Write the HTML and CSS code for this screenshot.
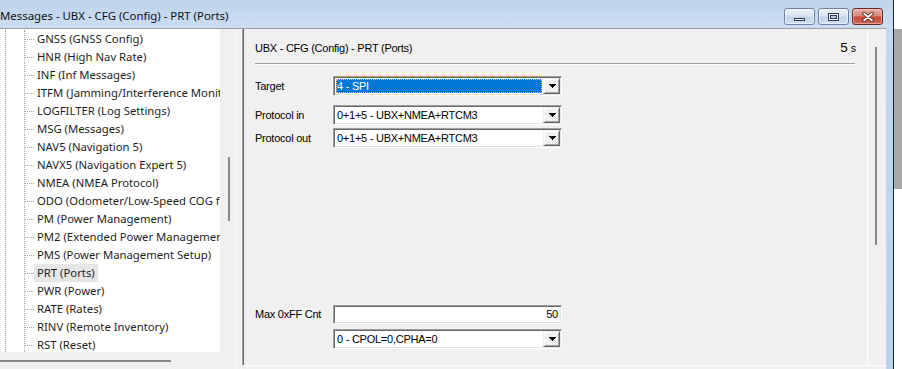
FILE: index.html
```html
<!DOCTYPE html>
<html>
<head>
<meta charset="utf-8">
<link rel="stylesheet" href="styles.css">
</head>
<body>
<div class="screen">
  <div class="win">
    <div class="titlebar">
      <div class="title">Messages - UBX - CFG (Config) - PRT (Ports)</div>
      <div class="caption">
        <div class="cbtn"><span class="min-glyph"></span></div>
        <div class="cbtn"><span class="max-glyph"><span class="max-in"></span></span></div>
        <div class="cbtn close">
          <svg width="12" height="10" viewBox="0 0 12 10"><path d="M2 1.5L10 8.5M10 1.5L2 8.5" stroke="#4a1a15" stroke-width="3.6" stroke-linecap="round"/><path d="M2 1.5L10 8.5M10 1.5L2 8.5" stroke="#fff" stroke-width="1.8" stroke-linecap="round"/></svg>
        </div>
      </div>
    </div>
    <div class="frame-body">
      <div class="client">
        <div class="left">
          <div class="left-top">
            <div class="tree">
              <div class="rail"></div>
              <div class="items">
                <div class="item"><span class="dash"></span><span class="lbl">GNSS (GNSS Config)</span></div>
                <div class="item"><span class="dash"></span><span class="lbl">HNR (High Nav Rate)</span></div>
                <div class="item"><span class="dash"></span><span class="lbl">INF (Inf Messages)</span></div>
                <div class="item"><span class="dash"></span><span class="lbl">ITFM (Jamming/Interference Monitor)</span></div>
                <div class="item"><span class="dash"></span><span class="lbl">LOGFILTER (Log Settings)</span></div>
                <div class="item"><span class="dash"></span><span class="lbl">MSG (Messages)</span></div>
                <div class="item"><span class="dash"></span><span class="lbl">NAV5 (Navigation 5)</span></div>
                <div class="item"><span class="dash"></span><span class="lbl">NAVX5 (Navigation Expert 5)</span></div>
                <div class="item"><span class="dash"></span><span class="lbl">NMEA (NMEA Protocol)</span></div>
                <div class="item"><span class="dash"></span><span class="lbl">ODO (Odometer/Low-Speed COG filter)</span></div>
                <div class="item"><span class="dash"></span><span class="lbl">PM (Power Management)</span></div>
                <div class="item"><span class="dash"></span><span class="lbl">PM2 (Extended Power Management)</span></div>
                <div class="item"><span class="dash"></span><span class="lbl">PMS (Power Management Setup)</span></div>
                <div class="item"><span class="dash"></span><span class="lbl sel">PRT (Ports)</span></div>
                <div class="item"><span class="dash"></span><span class="lbl">PWR (Power)</span></div>
                <div class="item"><span class="dash"></span><span class="lbl">RATE (Rates)</span></div>
                <div class="item"><span class="dash"></span><span class="lbl">RINV (Remote Inventory)</span></div>
                <div class="item"><span class="dash"></span><span class="lbl">RST (Reset)</span></div>
              </div>
            </div>
            <div class="vscroll"><div class="vthumb"></div></div>
          </div>
          <div class="hscroll"><div class="hthumb"></div></div>
        </div>
        <div class="splitter"></div>
        <div class="panel">
          <div class="pinner">
            <div class="phead">
              <span>UBX - CFG (Config) - PRT (Ports)</span>
              <span class="age">5<small>s</small></span>
            </div>
            <div class="sep"></div>
            <div class="row r1">
              <span class="label">Target</span>
              <div class="combo">
                <span class="cval sel">4 - SPI</span>
                <span class="dd"><svg width="7" height="4" viewBox="0 0 7 4"><path d="M0 0h7v1H0zM1 1h5v1H1zM2 2h3v1H2zM3 3h1v1H3z" fill="#000"/></svg></span>
              </div>
            </div>
            <div class="row r2">
              <span class="label">Protocol in</span>
              <div class="combo">
                <span class="cval">0+1+5 - UBX+NMEA+RTCM3</span>
                <span class="dd"><svg width="7" height="4" viewBox="0 0 7 4"><path d="M0 0h7v1H0zM1 1h5v1H1zM2 2h3v1H2zM3 3h1v1H3z" fill="#000"/></svg></span>
              </div>
            </div>
            <div class="row r3">
              <span class="label">Protocol out</span>
              <div class="combo">
                <span class="cval">0+1+5 - UBX+NMEA+RTCM3</span>
                <span class="dd"><svg width="7" height="4" viewBox="0 0 7 4"><path d="M0 0h7v1H0zM1 1h5v1H1zM2 2h3v1H2zM3 3h1v1H3z" fill="#000"/></svg></span>
              </div>
            </div>
            <div class="row r4">
              <span class="label">Max 0xFF Cnt</span>
              <div class="input">50</div>
            </div>
            <div class="row r5">
              <span class="label"></span>
              <div class="combo">
                <span class="cval">0 - CPOL=0,CPHA=0</span>
                <span class="dd"><svg width="7" height="4" viewBox="0 0 7 4"><path d="M0 0h7v1H0zM1 1h5v1H1zM2 2h3v1H2zM3 3h1v1H3z" fill="#000"/></svg></span>
              </div>
            </div>
          </div>
          <div class="pscroll"><div class="pthumb"></div></div>
        </div>
      </div>
      <div class="frame-right"></div>
    </div>
  </div>
  <div class="outside"><div class="outside-gray"></div></div>
</div>
</body>
</html>
```
FILE: styles.css
```css
html, body {
  margin: 0;
  padding: 0;
  background: #fff;
}
body {
  font-family: "Liberation Sans", Arial, sans-serif;
  font-size: 11px;
  color: #000;
}
.screen {
  display: flex;
  width: 902px;
  height: 369px;
  overflow: hidden;
}
.win {
  width: 893px;
  flex: none;
  display: flex;
  flex-direction: column;
  border-right: 1px solid #15222f;
}
.titlebar {
  height: 28px;
  flex: none;
  display: flex;
  justify-content: space-between;
  background: linear-gradient(#bed3ec, #cbddf2);
  overflow: hidden;
}
.title {
  font-family: "Noto Sans", sans-serif;
  font-size: 11.4px;
  line-height: 18px;
  margin-top: 7px;
  color: #111;
  white-space: nowrap;
}
.caption {
  display: flex;
  gap: 3px;
  padding: 8px 10px 0 0;
  align-items: flex-start;
}
.cbtn {
  width: 31px;
  height: 17px;
  box-sizing: border-box;
  border: 1px solid #6e83a2;
  border-radius: 3px;
  display: flex;
  align-items: center;
  justify-content: center;
  background: linear-gradient(#edf3fa, #d7e3f2 48%, #c2d4ea 52%, #cfdff2);
  box-shadow: inset 0 0 0 1px rgba(255, 255, 255, 0.55);
}
.cbtn.close {
  border-color: #6c2a24;
  background: linear-gradient(#eab0a6, #d88678 48%, #c4463a 52%, #d36a5a);
  box-shadow: inset 0 0 0 1px rgba(255, 220, 210, 0.45);
}
.cbtn svg {
  display: block;
}
.min-glyph {
  width: 9px;
  height: 1px;
  border: 1px solid #2a3a52;
  background: #fff;
  margin-top: 5px;
}
.max-glyph {
  width: 11px;
  height: 8px;
  box-sizing: border-box;
  border: 1px solid #2a3a52;
  background: #fff;
  display: flex;
  align-items: center;
  justify-content: center;
}
.max-in {
  width: 5px;
  height: 2px;
  border: 1px solid #2a3a52;
  background: #b7c9e2;
  margin-top: 1px;
}
.frame-body {
  flex: 1;
  display: flex;
  min-height: 0;
}
.client {
  width: 886px;
  flex: none;
  display: flex;
  background: #f0f0f0;
  border-top: 1px solid #a0a0a0;
}
.frame-right {
  width: 7px;
  flex: none;
  background: linear-gradient(#c4d8ef, #b9d2ed);
}
.outside {
  flex: 1;
  background: #fff;
}
.outside-gray {
  margin-top: 29px;
  height: 160px;
  background: #a9a9a9;
}

/* left tree */
.left {
  width: 236px;
  flex: none;
  display: flex;
  flex-direction: column;
}
.left-top {
  height: 323px;
  flex: none;
  display: flex;
}
.tree {
  width: 220px;
  flex: none;
  background: #fff;
  display: flex;
  overflow: hidden;
  padding-top: 1px;
  box-sizing: border-box;
}
.rail {
  margin-left: 5px;
  width: 18px;
  flex: none;
  border-left: 1px dotted #a0a0a0;
}
.items {
  flex: 1;
  min-width: 0;
  display: flex;
  flex-direction: column;
  border-left: 1px dotted #a0a0a0;
}
.item {
  height: 18px;
  flex: none;
  display: flex;
  align-items: center;
  white-space: nowrap;
  font-family: "Noto Sans", sans-serif;
  font-size: 11.3px;
  color: #1e1e1e;
}
.dash {
  width: 9px;
  height: 0;
  flex: none;
  border-top: 1px dotted #a0a0a0;
}
.lbl {
  padding: 0 3px;
  line-height: 18px;
}
.lbl.sel {
  background: #e6e6e6;
}
.vscroll {
  width: 16px;
  flex: none;
  background: #f0f0f0;
}
.vthumb {
  margin: 128px 0 0 8px;
  width: 2px;
  height: 64px;
  background: #888;
}
.hscroll {
  flex: 1;
  background: #f0f0f0;
}
.hthumb {
  margin-top: 8px;
  width: 171px;
  height: 2px;
  background: #888;
}
.splitter {
  width: 6px;
  flex: none;
  box-sizing: border-box;
  border-left: 1px solid #fbfbfb;
  border-right: 1px solid #fbfbfb;
}

/* right panel */
.panel {
  flex: 1;
  display: flex;
  margin-bottom: 3px;
  border-left: 1px solid #a0a0a0;
  border-bottom: 1px solid #fff;
  box-shadow: inset 1px 0 0 #696969;
}
.pinner {
  flex: 1;
  min-width: 0;
  padding: 10px 11px 0 12px;
  letter-spacing: -0.25px;
}
.pscroll {
  width: 19px;
  flex: none;
  box-sizing: border-box;
  border-left: 1px solid #fff;
}
.pthumb {
  margin: 18px 0 0 7px;
  width: 2px;
  height: 198px;
  background: #888;
}
.phead {
  height: 18px;
  line-height: 18px;
  display: flex;
  justify-content: space-between;
  align-items: baseline;
  white-space: nowrap;
}
.age {
  font-size: 13.5px;
  letter-spacing: 0;
}
.age small {
  font-size: 10.5px;
  margin-left: 3px;
}
.sep {
  margin: 6px 1px 0 0;
  border-top: 1px solid #a0a0a0;
  border-bottom: 1px solid #fff;
}
.row {
  display: grid;
  grid-template-columns: 78px 229px;
  align-items: center;
  height: 20px;
}
.r1 { margin-top: 11px; }
.r2 { margin-top: 9px; }
.r3 { margin-top: 3px; }
.r4 { margin-top: 156px; height: 19px; }
.r5 { margin-top: 6px; }
.label {
  line-height: 20px;
  white-space: nowrap;
}
.combo {
  height: 20px;
  box-sizing: border-box;
  display: flex;
  padding: 1px;
  background: #fff;
  border: 1px solid;
  border-color: #a0a0a0 #fff #fff #a0a0a0;
  box-shadow: inset 1px 1px 0 #696969, inset -1px -1px 0 #e3e3e3;
}
.cval {
  flex: 1;
  min-width: 0;
  padding-left: 2px;
  line-height: 16px;
  white-space: nowrap;
}
.cval.sel {
  margin: 1px;
  padding-left: 1px;
  line-height: 14px;
  background: #0078d7;
  color: #fff;
  outline: 1px dotted #f0c060;
  outline-offset: -1px;
}
.dd {
  width: 17px;
  flex: none;
  box-sizing: border-box;
  background: #f0f0f0;
  border: 1px solid;
  border-color: #f0f0f0 #696969 #696969 #f0f0f0;
  box-shadow: inset 1px 1px 0 #fff, inset -1px -1px 0 #a0a0a0;
  display: flex;
  align-items: center;
  justify-content: center;
}
.dd svg {
  display: block;
  margin-left: 1px;
}
.input {
  height: 19px;
  box-sizing: border-box;
  padding: 1px 3px 0 2px;
  line-height: 15px;
  text-align: right;
  background: #fff;
  border: 1px solid;
  border-color: #a0a0a0 #fff #fff #a0a0a0;
  box-shadow: inset 1px 1px 0 #696969, inset -1px -1px 0 #e3e3e3;
}
```
